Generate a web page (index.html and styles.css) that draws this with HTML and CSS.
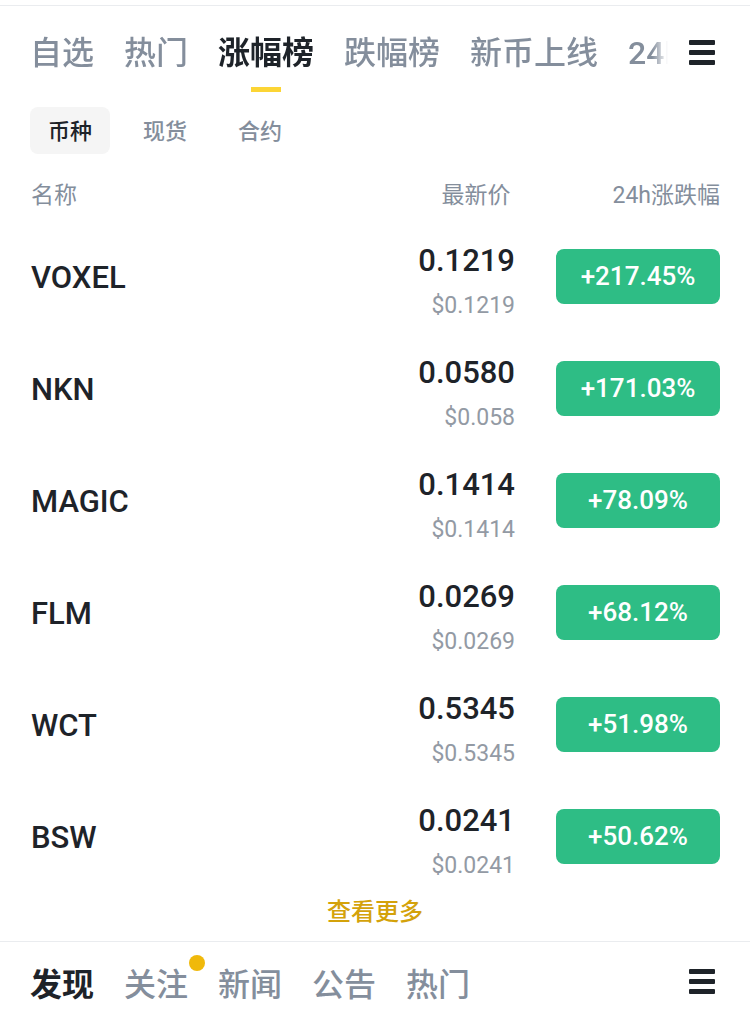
FILE: index.html
```html
<!DOCTYPE html>
<html lang="zh-CN">
<head>
    <meta charset="UTF-8">
    <meta name="viewport" content="width=device-width, initial-scale=1.0">
    <title>涨幅榜</title>
    <link rel="stylesheet" href="styles.css">
</head>
<body>
    <div class="page">
        <!-- abas do topo -->
        <div class="tabbar">
            <div class="tab-scroll">
                <div class="tab">自选</div>
                <div class="tab">热门</div>
                <div class="tab active">涨幅榜<span class="underline"></span></div>
                <div class="tab">跌幅榜</div>
                <div class="tab">新币上线</div>
                <div class="tab">24h成交额</div>
            </div>
            <div class="menu-icon"><span></span><span></span><span></span></div>
        </div>

        <div class="subtabs">
            <div class="subtab active">币种</div>
            <div class="subtab">现货</div>
            <div class="subtab">合约</div>
        </div>

        <div class="list-head">
            <div class="col-name">名称</div>
            <div class="col-price">最新价</div>
            <div class="col-change">24h涨跌幅</div>
        </div>

        <div class="list">
            <div class="row">
                <div class="coin">VOXEL</div>
                <div class="price"><div class="last">0.1219</div><div class="usd">$0.1219</div></div>
                <div class="badge">+217.45%</div>
            </div>
            <div class="row">
                <div class="coin">NKN</div>
                <div class="price"><div class="last">0.0580</div><div class="usd">$0.058</div></div>
                <div class="badge">+171.03%</div>
            </div>
            <div class="row">
                <div class="coin">MAGIC</div>
                <div class="price"><div class="last">0.1414</div><div class="usd">$0.1414</div></div>
                <div class="badge">+78.09%</div>
            </div>
            <div class="row">
                <div class="coin">FLM</div>
                <div class="price"><div class="last">0.0269</div><div class="usd">$0.0269</div></div>
                <div class="badge">+68.12%</div>
            </div>
            <div class="row">
                <div class="coin">WCT</div>
                <div class="price"><div class="last">0.5345</div><div class="usd">$0.5345</div></div>
                <div class="badge">+51.98%</div>
            </div>
            <div class="row">
                <div class="coin">BSW</div>
                <div class="price"><div class="last">0.0241</div><div class="usd">$0.0241</div></div>
                <div class="badge">+50.62%</div>
            </div>
        </div>

        <div class="more">查看更多</div>

        <!-- abas de baixo -->
        <div class="bottombar">
            <div class="bottom-tabs">
                <div class="tab active">发现</div>
                <div class="tab dot">关注</div>
                <div class="tab">新闻</div>
                <div class="tab">公告</div>
                <div class="tab">热门</div>
            </div>
            <div class="menu-icon"><span></span><span></span><span></span></div>
        </div>
    </div>
</body>
</html>
```

FILE: styles.css
```css
body {
    margin: 0;
    background-color: #fff;
    font-family: Roboto, "Noto Sans CJK SC", sans-serif;
    color: #1e2329;
}

.page {
    width: 750px;
    margin-top: 5px;
    border-top: 1px solid #eaecef;
}

/* --- abas do topo --- */
.tabbar {
    display: flex;
    align-items: flex-start;
    height: 90px;
}

.tab-scroll {
    flex: 1;
    display: flex;
    gap: 30px;
    padding-left: 30px;
    padding-top: 27px;
    box-sizing: border-box;
    height: 90px;
    overflow: hidden;
    white-space: nowrap;
    -webkit-mask-image: linear-gradient(to right, #000 652px, transparent 668px);
    mask-image: linear-gradient(to right, #000 652px, transparent 668px);
    max-width: 668px;
}

.tab {
    position: relative;
    font-size: 32px;
    line-height: 40px;
    font-weight: 500;
    color: #848e9c;
    flex-shrink: 0;
}

.tab.active {
    color: #1e2329;
    font-weight: 700;
}

.underline {
    position: absolute;
    left: 50%;
    top: 54px;
    width: 30px;
    height: 5px;
    margin-left: -15px;
    background-color: #fcd535;
}

.menu-icon {
    display: flex;
    flex-direction: column;
    gap: 5px;
    width: 26px;
    margin-left: auto;
    margin-right: 35px;
    margin-top: 34px;
}

.menu-icon span {
    display: block;
    height: 5px;
    background-color: #1e2329;
    border-radius: 1px;
}

/* --- sub abas --- */
.subtabs {
    display: flex;
    gap: 15px;
    padding-left: 30px;
    margin-top: 11px;
}

.subtab {
    height: 47px;
    line-height: 49px;
    padding: 0 18px;
    font-size: 22px;
    font-weight: 500;
    color: #848e9c;
    border-radius: 8px;
}

.subtab.active {
    background-color: #f5f5f5;
    color: #1e2329;
}

/* --- lista --- */
.list-head {
    display: flex;
    align-items: center;
    padding: 0 30px 0 31px;
    margin-top: 24px;
    height: 30px;
    font-size: 23px;
    color: #848e9c;
}

.col-name {
    flex: 1;
}

.col-price {
    text-align: right;
    margin-right: 102px;
}

.list {
    margin-top: 12px;
}

.row {
    display: flex;
    align-items: center;
    height: 112px;
    padding: 0 30px 0 31px;
}

.coin {
    flex: 1;
    font-size: 31px;
    font-weight: 500;
    color: #1e2329;
    margin-top: 2px;
}

.price {
    text-align: right;
    margin-right: 41px;
    margin-top: 12px;
}

.last {
    font-size: 31px;
    line-height: 34px;
    font-weight: 500;
    color: #1e2329;
}

.usd {
    font-size: 23px;
    line-height: 30px;
    margin-top: 13px;
    color: #939aa4;
}

.badge {
    width: 164px;
    height: 55px;
    line-height: 55px;
    border-radius: 8px;
    background-color: #2ebd85;
    color: #fff;
    text-align: center;
    font-size: 26px;
    font-weight: 500;
}

.more {
    text-align: center;
    height: 38px;
    line-height: 40px;
    font-size: 24px;
    font-weight: 500;
    color: #d4a20a;
    margin-bottom: 11px;
}

/* --- abas de baixo --- */
.bottombar {
    display: flex;
    align-items: flex-start;
    border-top: 1px solid #eaecef;
    height: 67px;
}

.bottom-tabs {
    display: flex;
    gap: 30px;
    padding-left: 30px;
    padding-top: 23px;
}

.tab.dot::after {
    content: "";
    position: absolute;
    right: -17px;
    top: -10px;
    width: 16px;
    height: 16px;
    border-radius: 50%;
    background-color: #f0b90b;
}

.bottombar .menu-icon {
    margin-top: 27px;
}
```
